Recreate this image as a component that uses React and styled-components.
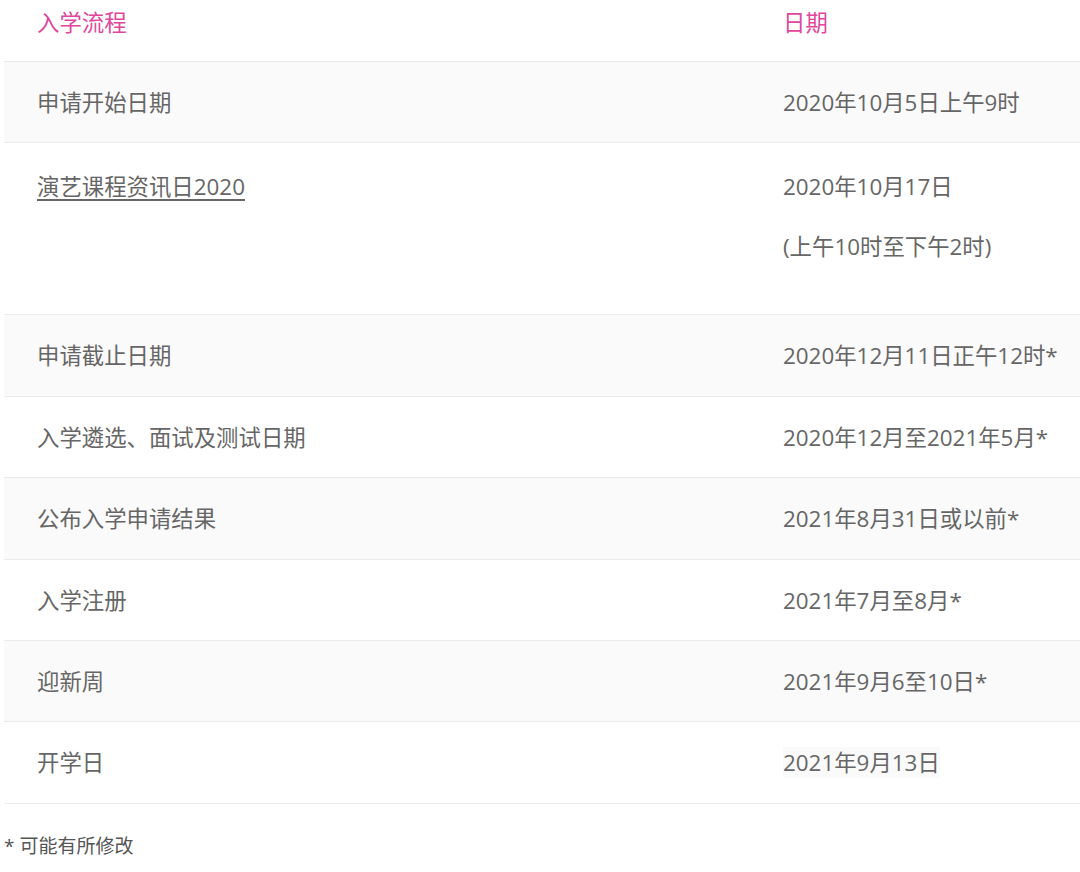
import styled, { createGlobalStyle } from "styled-components";

const GlobalStyle = createGlobalStyle`
  body {
    margin: 0;
    background: #fff;
    font-family: "Open Sans", "Noto Sans CJK SC", sans-serif;
  }
`;

const Page = styled.div`
  padding-left: 4px;
  overflow: hidden;
`;

const Table = styled.table`
  min-width: 100%;
  border-collapse: collapse;
  font-size: 22.4px;
  color: #666;
`;

const Row = styled.tr`
  background: ${(p) => (p.$shaded ? "#fafafa" : "#fff")};
  border-bottom: 1px solid #ebebeb;
`;

const HeadCell = styled.th`
  text-align: left;
  font-weight: 400;
  color: #e0469b;
  line-height: 33px;
  padding: 6px 33px 22px;
  white-space: nowrap;
  min-width: ${(p) => p.$w || "0"};
  width: ${(p) => p.$w || "auto"};
`;

const Cell = styled.td`
  vertical-align: top;
  line-height: 33px;
  white-space: nowrap;
  padding: ${(p) => (p.$tall ? "27px 33px 24px" : "24px 33px 23.4px")};
`;

const Para = styled.p`
  margin: 0 0 27px;
`;

const Link = styled.a`
  color: #666;
  text-decoration: underline;
  text-underline-offset: 4px;
`;

const Marked = styled.span`
  background: #fafafa;
`;

const Note = styled.p`
  margin: 27px 0 0;
  font-size: 19px;
  line-height: 30px;
  color: #555;
`;

const rows = [
  ["申请开始日期", "2020年10月5日上午9时"],
  ["申请截止日期", "2020年12月11日正午12时*"],
  ["入学遴选、面试及测试日期", "2020年12月至2021年5月*"],
  ["公布入学申请结果", "2021年8月31日或以前*"],
  ["入学注册", "2021年7月至8月*"],
  ["迎新周", "2021年9月6至10日*"],
];

export default function App() {
  return (
    <Page>
      <GlobalStyle />
      <Table>
        <thead>
          <Row>
            <HeadCell $w="680px">入学流程</HeadCell>
            <HeadCell>日期</HeadCell>
          </Row>
        </thead>
        <tbody>
          <Row $shaded>
            <Cell>{rows[0][0]}</Cell>
            <Cell>{rows[0][1]}</Cell>
          </Row>
          <Row>
            <Cell $tall>
              <Link href="#">演艺课程资讯日2020</Link>
            </Cell>
            <Cell $tall>
              <Para>2020年10月17日</Para>
              <Para>(上午10时至下午2时)</Para>
            </Cell>
          </Row>
          {rows.slice(1).map((r, i) => (
            <Row key={r[0]} $shaded={i % 2 === 0}>
              <Cell>{r[0]}</Cell>
              <Cell>{r[1]}</Cell>
            </Row>
          ))}
          <Row>
            <Cell>开学日</Cell>
            <Cell>
              <Marked>2021年9月13日</Marked>
            </Cell>
          </Row>
        </tbody>
      </Table>
      <Note>* 可能有所修改</Note>
    </Page>
  );
}
